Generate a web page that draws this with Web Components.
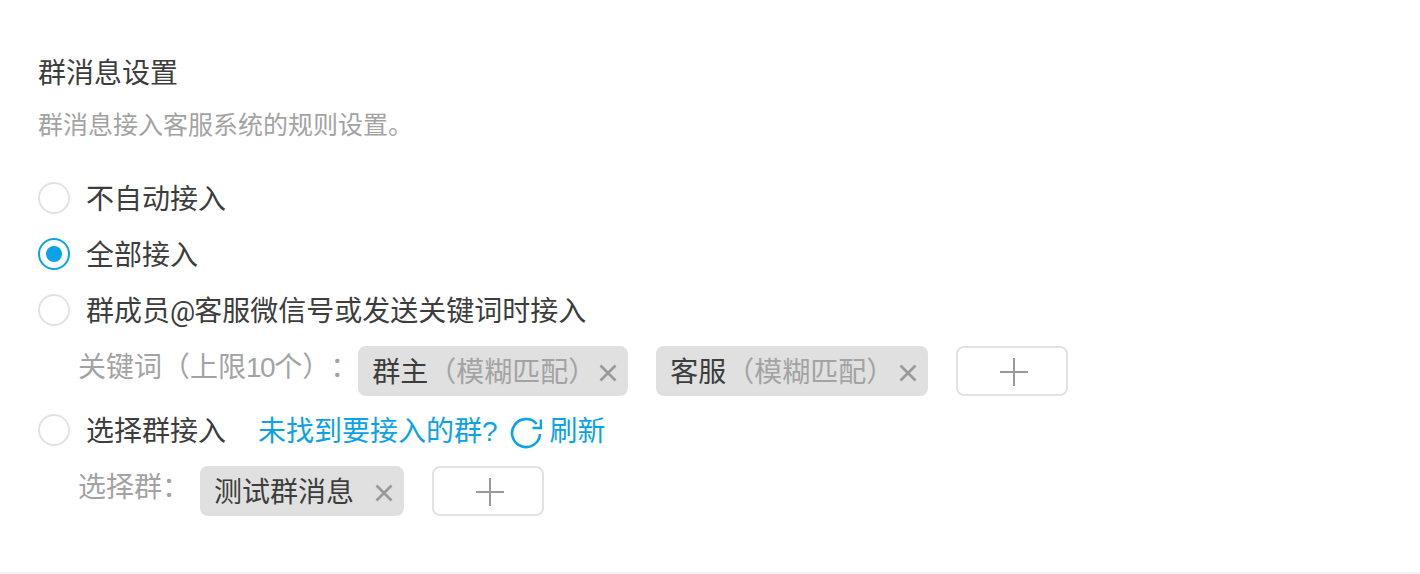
<!DOCTYPE html>
<html lang="zh-CN"><head><meta charset="utf-8">
<style>
html,body{margin:0;padding:0;background:#fff}
body{font-family:"Liberation Sans","Noto Sans CJK SC",sans-serif;color:#3d3d3d}
</style></head><body>
<settings-section heading="群消息设置" desc="群消息接入客服系统的规则设置。">
  <radio-row label="不自动接入"></radio-row>
  <radio-row label="全部接入" checked></radio-row>
  <radio-row label="群成员<span class='at'>@</span>客服微信号或发送关键词时接入"></radio-row>
  <field-row label="关键词（上限<span class='n'>10</span>个）" gap="0">
    <tag-chip hint="（模糊匹配）" width="270">群主</tag-chip>
    <tag-chip hint="（模糊匹配）" width="272">客服</tag-chip>
    <add-button></add-button>
  </field-row>
  <radio-row label="选择群接入" top="6">
    <refresh-link text="未找到要接入的群?" action="刷新"></refresh-link>
  </radio-row>
  <field-row label="选择群" gap="10" top="8">
    <tag-chip width="204">测试群消息</tag-chip>
    <add-button></add-button>
  </field-row>
</settings-section>
<script>
const FF='"Liberation Sans","Noto Sans CJK SC",sans-serif';
function def(name, css, html){
  customElements.define(name, class extends HTMLElement{
    connectedCallback(){
      if(this.shadowRoot) return;
      const r=this.attachShadow({mode:'open'});
      r.innerHTML='<style>'+css+'</style>'+html(this);
    }
  });
}
def('settings-section',`
:host{display:block;box-sizing:border-box;height:574px;padding:54px 38px 0;border-bottom:2px solid #f4f4f4}
h2{margin:0;font:400 28px/40px ${FF};color:#3d3d3d}
p{margin:13px 0 27px;font:400 25px/36px ${FF};color:#a3a3a3}
`,h=>`<h2>${h.getAttribute('heading')}</h2><p>${h.getAttribute('desc')}</p><slot></slot>`);
def('radio-row',`
:host{display:flex;align-items:center;height:56px}
.c{box-sizing:border-box;width:32px;height:32px;border-radius:50%;border:2px solid #e2e2e2;display:flex;align-items:center;justify-content:center;flex:none}
:host([checked]) .c{border-color:#0ba2e8}
:host([checked]) .c::after{content:"";width:16px;height:16px;border-radius:50%;background:#0ba2e8}
.l{margin:4px 0 0 16px;font:400 28px/40px ${FF};color:#3d3d3d}
.at{font-family:Roboto,sans-serif;letter-spacing:-1px}
`,h=>{ if(h.hasAttribute('top')) h.style.marginTop=h.getAttribute('top')+'px';
 return `<span class="c"></span><span class="l">${h.getAttribute('label')}</span><slot></slot>`});
def('field-row',`
:host{display:flex;align-items:flex-start;padding-left:40px;margin-top:8px}
.l{font:400 28px/38px ${FF};color:#a3a3a3;white-space:nowrap;padding-top:3px}
.n{letter-spacing:-1.5px}
.k{display:inline-block;width:28px}
.s{display:flex;gap:28px}
`,h=>{ if(h.hasAttribute('top')) h.style.marginTop=h.getAttribute('top')+'px';
 return `<span class="l">${h.getAttribute('label')}<span class="k">：</span></span><span class="s" style="margin-left:${h.getAttribute('gap')}px"><slot></slot></span>`});
def('tag-chip',`
:host{display:flex;align-items:center;box-sizing:border-box;height:50px;padding:0 11px 0 14px;background:#e0e0e0;border-radius:8px;white-space:nowrap}
.t{font:400 28px/40px ${FF};color:#3d3d3d;margin-top:4px}
.h{font:400 28px/40px ${FF};color:#a3a3a3;margin-top:4px}
svg{width:18px;height:18px;margin-left:auto;margin-top:4px;flex:none}
`,h=>{ h.style.width=h.getAttribute('width')+'px';
 return `<span class="t"><slot></slot></span>${h.getAttribute('hint')?`<span class="h">${h.getAttribute('hint')}</span>`:''}<svg viewBox="0 0 18 18"><path d="M1.5 1.5L16.5 16.5M16.5 1.5L1.5 16.5" stroke="#999" stroke-width="2.6" fill="none"/></svg>`});
def('add-button',`
:host{display:flex;align-items:center;justify-content:center;box-sizing:border-box;width:112px;height:50px;border:2px solid #e2e2e2;border-radius:8px;background:#fff}
svg{width:28px;height:28px;margin:2px 0 0 4px}
`,()=>`<svg viewBox="0 0 28 28"><path d="M0 14H28M14 0V28" stroke="#999" stroke-width="2" fill="none"/></svg>`);
def('refresh-link',`
:host{display:flex;align-items:center;margin-left:32px;font:400 28px/40px ${FF};color:#0ba2e8;white-space:nowrap}
span{margin-top:4px}
svg{width:32px;height:32px;margin:6px 8px 0 12px;flex:none}
`,h=>`<span>${h.getAttribute('text')}</span><svg viewBox="0 0 32 32"><path d="M26.7 7A14 14 0 1 0 30 17" stroke="#0ba2e8" stroke-width="2.6" fill="none"/><path d="M31 2.5V11H22.5" stroke="#0ba2e8" stroke-width="2.6" fill="none"/></svg><span>${h.getAttribute('action')}</span>`);
</script>
</body></html>
